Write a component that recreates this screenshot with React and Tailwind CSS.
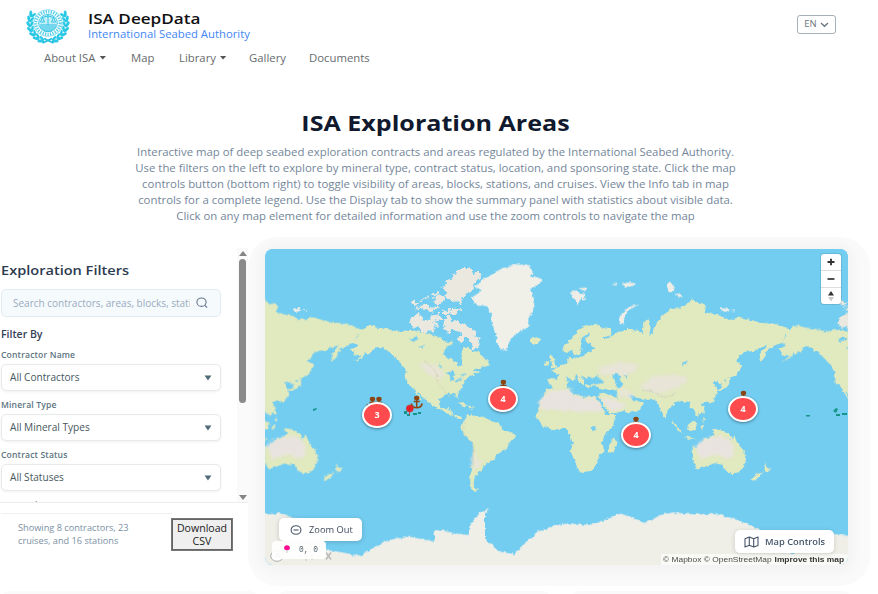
import React from "react";

const FONT = "font-['Open_Sans','Noto_Sans',sans-serif]";

const leaves = [-28, -12, 4, 20, 36, 52, 68];

function Logo() {
  return (
    <svg viewBox="0 0 44 36" className="h-9 w-11 shrink-0" fill="none" stroke="#22bfe2">
      <ellipse cx="22" cy="15" rx="14.500" ry="13.400" strokeWidth="0.7" opacity=".7" />
      <ellipse cx="22" cy="15" rx="12.200" ry="11.200" strokeWidth="3.200" strokeDasharray="1.300 1.200" opacity="0.75" />
      <ellipse cx="22" cy="15" rx="9.400" ry="8.600" strokeWidth="0.8" fill="#c4eef8" />
      <path d="M22 7v10M16 9.500l6-1.500 6 1.500M14.500 14l2-4.500 2 4.500zM25.500 14l2-4.500 2 4.500z" strokeWidth="0.9" />
      <path d="M14 17h16M14 19h16M15.500 21h13M18 23h8" strokeWidth="1" />
      <g fill="#2cc8e6" stroke="none">
        {leaves.map((a) => (
          <g key={a}>
            <g transform={`rotate(${a} 22 15)`}>
              <ellipse cx="41.500" cy="15" rx="1.500" ry="3.400" transform="rotate(25 41.500 15)" />
              <ellipse cx="38.500" cy="15" rx="1.300" ry="3" transform="rotate(-25 38.500 15)" />
            </g>
            <g transform={`rotate(${-a} 22 15)`}>
              <ellipse cx="2.500" cy="15" rx="1.500" ry="3.400" transform="rotate(-25 2.500 15)" />
              <ellipse cx="5.500" cy="15" rx="1.300" ry="3" transform="rotate(25 5.500 15)" />
            </g>
          </g>
        ))}
      </g>
      <path d="M16.500 35l9.500-4.500M27.500 35L18 30.500" strokeWidth="1.800" />
    </svg>
  );
}

/* One full turn of the globe; repeated sideways for the wrapped copies. */
function World() {
  return (
    <g id="world" transform="translate(410 240) scale(.33333)">
      <g fill="#e1e9be">
        <path d="M-150 275l15-15 15-5 20 8 25 2 20 5 20 5 35-6 15 3 25 6 20 4 25 8 15 10 15 10 10-10 5 15-22 3-8 27 22 12 20 12 3 9 10-3-2-20 6-18 0-15 13-2 15 17 20-8 5 18 20 15 8 13-18 7-20 3-15 7 25 3-20 8-15 9-15 17-5 13-15 17 5 18-7-3-8-15-25 3-18 13-2 18 10 14 20-3 3 8 9 15 12-3 14 8-7 6-12-6-23-12-20-11-20-9-22-16-18-20-12-10 14 27-4 0-24-42-15-10-5-20 2-15-12-20-20-20-15-15-25-17-20 0-10 12-14 10-8-8-3 14-34 17 28-20-26-4-8-20 22-3-7-8-18-4 19-8z" />
        <path d="M165 535l10-12 25 7 15 0 30 14 20 6 15 20 35 10-1 12-14 13-10 20-20 10-15 20-25 15-15 20-8 10-12 15-5 15 5 15 10 6-15 1-12-17 0-25 8-20 2-30 5-30-5-20-20-20-15-22 5-18z" />
        <path d="M410 445l35 2 30-7 10 20 35 10 40 0 10 20 20 35 30 0-8 28-32 37-1 25 5 20-20 10 3 18-25 29-35 6-10-28-15-35 6-28-14-27 0-12-20-2-25 5-28-12-22-26 5-25z" />
        <path d="M410 415l30 0 5-12-20-10 26-14 24-13-2-18 14 10 22-6 22-13 25-13-15-14-12 0-3-16 13-13-2-5-15 10-12 18 6 18-12 22-12 1-6-20-14 12-12-5-1-14 14-10 12-16 18-24 26-14 30-5 18 12 26 5 1 18-24 6 8 6 28-19 37-9 26 1 18 8 6-32 11-12 8 25-5 30 15-20 12-30 35-32 40-6 28-24 18 12 24 6-5 20 52 13 18 11 40-8 55 16 50 5 30 10 27 22-17 7-12-12-5 22-25 14-20 10-12 24-13 17-3-24 22-29-15 7-22 12-35 3-22 26 20 15-18 29-22 8-15 7 6 18-10 5-12-20-18 3 10 18 5 15-18 28-22-4-10 8 6 19-15 18-12-15-8-10-8-18-18-4-22 5-18 18-14 28-14-30-10-24-30 0-28-6-20-10-6 3 15 18 32 3-13 22-40 9-22-30-9-25-2-15-20 2-25-5-15-10-12 7-20-27-15-6 22 20 10 18-8-3-22-15-18-12-12 5-10 13-14 16-26-2z" />
        <path d="M562 466l20-8 40 18 34 17-16 20-40 10-16-18z" />
        <path d="M422 345l10 8 2 16 10 14-22 2 4-14-6-12zM404 366l14-4-2 14-10 2zM360 296l22-4 10 8-12 12-20-4zM614 592l6 16-10 28-14 2-2-18 10-14z" />
        <path d="M850 370l0 40-3-2-2-34zM952 370l4 40-4 0-3-30zM948 418l10-4 0 18-12 14-26 8 4-8 18-6z" />
        <path d="M783 540l8 8 16 18 10 14-12-6-20-26zM832 558l20-16 12 8-8 18-20 2zM870 560l12-6-6 18zM905 568l24-2 28 16 12 18-22-8-18 2-12-14zM873 500l8 0 4 20-8 0-5-12zM880 530l8 10-8 6zM820 588l28 6 14 4-28-2z" />
        <path d="M848 618l14 4 26-28 10 0 18-14 20-6 10 4 0 12 18 10 8-16 10 26 18 20 9 20-8 32-18 18-28-4-18-22-24-4-30 10-16 6-10-4-8-28z" />
        <path d="M962 693l12 0-4 10-6 0zM1063 668l8 16 13-2-10 14-10 0zM1060 694l-10 16-18 12-8-5 18-14zM140 485l22 4 16 10-16 0zM176 500l18 2-10 5z" />
      </g>
      <g fill="#e9e3e0" filter="url(#soft)">
        <path d="M387 484l28-30 35-3 30-3 10 17 35 10 38 2 20 36-60 3-70-6-60 0z" />
        <path d="M570 474l32 2 22 10 24 8-12 12-34 6z" />
        <path d="M30 370l40 0 30 25-5 25-25-8-30-20zM187 640l6-10 8 30 18 0-10 22-18 6-6-8z" opacity=".75" />
        <path d="M690 438l42-30 55-4 48 8-10 18-40 20-40 10-40-10zM560 385l70-20 60 10-30 30-90 0zM635 442l38 20-10 14-40-10z" opacity=".75" />
        <path d="M856 616l22-16 28-8 28-4 28 12 10 22-2 28-22 6-28-14-30 8-20 10z" />
      </g>
      <g fill="#ebe8df" filter="url(#frayed)">
        <path d="M0 232l20-10 8 14 30 4 25 22-16 20-30-5-20-20-17-12zM97 238l20-8 14 14 22 0 18 14 12 18 20 10 10 22-5 20-16-8-20-24-16 10-12-8 8-24-26-8-12 12-16-14zM60 230l14-5 6 20-14 15-8-14zM114 160l26-12 22 8-6 30-24-2-20-10zM70 180l20-10 20 8-12 12zM98 130l18-14 20-18 30-12 30 8 22 10-14 14-4 14-12 12-10 18-20 16-26-8-16-10-14-12zM20 200l24-6 18 10 20-6 10 12-44 6zM98 208l48-2 6 12-52 4zM25 180l24-14 0 12zM60 160l24 0 6 8-20 2zM5 190l10-8 10 8-14 10zM66 226l24 0 4 12-20 2z" />
      </g>
      <path fill="#f0efe8" d="M185 170l20-10 10-10-20-10 20-20 25-15 25-10 5-10 30-5 25-10 35 10 10 20-10 12 25-2 13 12-18 13-20 15 15 30-5 30-15 25 0 27-35 18-20 20-12 30-18-5-10-25-10-40-5-35-10-25-25-5-20-5z" />
      <path fill="#efede7" d="M480 152l20 0 8 10 14-6 6 24-14-4-12 16-10-14zM508 145l26-4-10 14zM628 248l8-28 22-20 28-6-30 16-14 22 4 24zM606 134l10-4 4 8zM638 132l18-4 20 2-8 8-24 2zM770 134l12-8 10 16-4 18-14-10zM798 162l12-2 8 12-14 2zM932 206l22-2 4 10-22 2zM964 211l12 0 0 4zM1080 252l10 0-2 4z" />
      <g fill="#73cdf0">
        <path d="M522 422l14-14 12 8 14-10 6 8 16 12-22 6-28 2-12-2zM606 408l16-8 10 8-8 8 14 18-6 12-16-6 0-18zM644 404l12 2-6 10zM108 400l20-8 12 10-12 4 4 14-10 4-2-18zM134 418l24-6-6 10-16 2zM152 404l16-4-8 8zM22 324l26-8-8 10zM0 298l14-8 12 6-16 10zM84 368l14 16-8-2zM816 374l16-14 0 6-14 14zM545 560l12-4-2 14-8 4zM50 270l22 4-16 8z" />
        <path d="M470 410l16 10 20 24-14-8-22-14zM500 402l8 16-4 10-10-16zM560 468l6 2 26 48-4 4z" />
      </g>
      <path d="M700 452q35-2 48 18 28 4 45-8" fill="none" stroke="#d0cdc3" strokeWidth="3" />
      <path d="M40 358l35 32 12 40 30 40M165 545l-5 30 30 42 0 60" fill="none" stroke="#d8d8ba" strokeWidth="3" />
    </g>
  );
}

function Anchor({ x, y }) {
  return (
    <g transform={`translate(${x} ${y})`} fill="none" stroke="#8b4513" strokeWidth="2">
      <ellipse cx="0" cy="-4" rx="2.700" ry="2.300" fill="#8b4513" stroke="none" />
      <path d="M0-3v8.500M-3-.5h6" strokeWidth="1.500" />
      <path d="M-5.500 1.500q1 4.300 5.500 4.300T5.500 1.500" strokeWidth="1.600" />
    </g>
  );
}

function MapCanvas() {
  return (
    <svg viewBox="265 249 583 316" className="absolute inset-0 h-full w-full">
      <defs>
        <filter id="coast" x="-5%" y="-5%" width="110%" height="110%">
          <feTurbulence type="fractalNoise" baseFrequency="0.22" numOctaves="3" seed="8" result="n" />
          <feDisplacementMap in="SourceGraphic" in2="n" scale="4.500" xChannelSelector="R" yChannelSelector="G" />
        </filter>
        <filter id="frayed" x="-10%" y="-10%" width="120%" height="120%">
          <feTurbulence type="fractalNoise" baseFrequency="0.05" numOctaves="2" seed="3" result="n" />
          <feDisplacementMap in="SourceGraphic" in2="n" scale="34" xChannelSelector="R" yChannelSelector="G" />
        </filter>
        <filter id="soft">
          <feGaussianBlur stdDeviation="4" />
        </filter>
      </defs>
      <rect x="265" y="249" width="583" height="316" fill="#73cdf0" />
      <g filter="url(#coast)">
        <World />
        <use href="#world" x="-428.3" />
        <use href="#world" x="428.3" />
        <path
          transform="translate(255 430) scale(.33333)"
          fill="#efefe8"
          d="M0 256L75 250 190 290 225 305 205 330 215 360 250 365 320 378 350 355 400 330 455 318 515 330 538 335 540 300 560 300 600 310 640 315 650 280 675 245 705 235 690 250 690 325 735 365 778 372 820 330 850 305 900 285 945 280 1005 285 1045 272 1095 250 1130 262 1170 278 1215 255 1255 247 1315 253 1385 252 1445 268 1515 300 1500 335 1540 365 1620 370 1630 330 1720 310 1800 320V430H0z"
        />
      </g>
      <g fill="#159488">
        <path d="M313 409l4-1-1 2-3 1zM404 411h3v3h-3zM407 414h3v2h-3zM413 413h4v2h-4zM418 412h3v2h-3zM806 415h4v1.500h-4zM833 411l3-3 2 1-2 4zM836 414h4v2h-4zM842 413h5v2h-5z" />
      </g>
      <Anchor x={372.5} y={403} />
      <Anchor x={379} y={403} />
      <Anchor x={416.7} y={402} />
      <Anchor x={503.4} y={386} />
      <Anchor x={636} y={423} />
      <Anchor x={743.5} y={397} />
      <path d="M409.500 410v5" stroke="#b34b4b" strokeWidth="1" />
      <circle cx="409.800" cy="408.500" r="3.600" fill="#e51f28" stroke="#b34b4b" strokeWidth=".6" />
    </svg>
  );
}

const clusters = [
  { n: 3, pos: "left-[97px] top-[153px]" },
  { n: 4, pos: "left-[223px] top-[137px]" },
  { n: 4, pos: "left-[356px] top-[173px]" },
  { n: 4, pos: "left-[463px] top-[147px]" },
];

const nav = [
  { label: "About ISA", caret: true, w: "w-[87px]" },
  { label: "Map", w: "w-12" },
  { label: "Library", caret: true, w: "w-[70px]" },
  { label: "Gallery", w: "w-[60px]" },
  { label: "Documents", w: "w-20" },
];

function Select({ label, value }) {
  return (
    <div className="mb-[7px] h-[43px]">
      <div className="h-[16px] text-[8.600px] leading-[15px] font-semibold tracking-[0.15px] text-[#5b7480]">{label}</div>
      <div className="flex h-[27px] w-[220px] items-center justify-between rounded-[5px] border border-[#e6eaed] bg-white px-[8px] text-[10.100px] text-[#475860] shadow-[0_1px_3px_rgba(0,0,0,0.06)]">
        <span>{value}</span>
        <svg viewBox="0 0 8 7" className="h-[6px] w-2"><path d="M0 .5h8L4 6.500z" fill="#4e6b77" /></svg>
      </div>
    </div>
  );
}

const description = [
  "Interactive map of deep seabed exploration contracts and areas regulated by the International Seabed Authority.",
  "Use the filters on the left to explore by mineral type, contract status, location, and sponsoring state. Click the map",
  "controls button (bottom right) to toggle visibility of areas, blocks, stations, and cruises. View the Info tab in map",
  "controls for a complete legend. Use the Display tab to show the summary panel with statistics about visible data.",
  "Click on any map element for detailed information and use the zoom controls to navigate the map",
];

export default function App() {
  return (
    <div className={`flex h-[594px] w-[878px] flex-col overflow-hidden bg-white ${FONT}`}>
      <header className="h-[102px] shrink-0">
        <div className="flex h-[48px] items-start pt-[8px] pl-[26px]">
          <Logo />
          <div className="ml-[18px] flex-1">
            <div className="w-fit origin-left scale-x-[1.14] text-[15px] leading-[20px] font-semibold whitespace-nowrap text-[#111]">ISA DeepData</div>
            <div className="w-fit origin-left scale-x-[1.076] text-[10.5px] leading-[12px] text-[#3f86f5]">International Seabed Authority</div>
          </div>
          <div className="mt-[7px] mr-[42px] flex h-[19px] w-[39px] items-center justify-center gap-[3px] rounded-[3px] border border-[#a7b0b6] text-[9.500px] text-[#6c757d]">
            EN
            <svg viewBox="0 0 9 6" className="h-[6px] w-[9px]" fill="none" stroke="#6c757d" strokeWidth="1.3"><path d="M1 1l3.500 3.300L8 1" /></svg>
          </div>
        </div>
        <nav className="flex h-5 items-center pl-[44px] text-[10.8px] text-[#666b6e]">
          {nav.map((n) => (
            <div key={n.label} className={n.w}>
              <div className="flex w-fit origin-left scale-x-[1.05] items-center gap-[4px] whitespace-nowrap">
                {n.label}
                {n.caret && <svg viewBox="0 0 6 4" className="h-[4px] w-[6px]"><path d="M0 0h6L3 3.600z" fill="#555" /></svg>}
              </div>
            </div>
          ))}
        </nav>
      </header>

      <section className="h-[135px] shrink-0 pr-[7px] text-center">
        <h1 className="h-[42px] scale-x-[1.14] text-[22px] leading-[40px] font-bold text-[#10192d]">ISA Exploration Areas</h1>
        <div className="scale-x-[1.053] text-[10.8px] leading-[15.9px] whitespace-nowrap text-[#74869a]">
          {description.map((d) => <div key={d}>{d}</div>)}
        </div>
      </section>

      <main className="flex h-[349px] shrink-0">
        <aside className="flex w-[248px] shrink-0 flex-col">
          <div className="flex h-[266px] border-b border-[#ebeef0]">
            <div className="w-[237px] overflow-hidden pt-[22px] pl-px">
              <h2 className="h-[30px] w-fit origin-left scale-x-[1.12] text-[13px] leading-[23px] font-semibold text-[#2c3a4e]">Exploration Filters</h2>
              <div className="flex h-[28px] w-[220px] items-center rounded-[5px] border border-[#e3ebf2] bg-[#f5fafc] pl-[11px]">
                <div className="w-[177px] overflow-hidden text-[10px] whitespace-nowrap text-[#9aabc0]">Search contractors, areas, blocks, stations</div>
                <svg viewBox="0 0 12 12" className="ml-[6px] h-[12px] w-[12px]" fill="none" stroke="#66758e" strokeWidth="1.1"><ellipse cx="5.500" cy="5.200" rx="4.600" ry="4.200" /><path d="M8.600 8.200l2.500 2.500" /></svg>
              </div>
              <div className="mt-[9px] h-[22px] text-[10.5px] leading-[17px] font-semibold text-[#334155]">Filter By</div>
              <Select label="Contractor Name" value="All Contractors" />
              <Select label="Mineral Type" value="All Mineral Types" />
              <Select label="Contract Status" value="All Statuses" />
              <div className="text-[8.600px] leading-[15px] font-semibold text-[#5b7480]">Sponsoring State</div>
            </div>
            <div className="mt-[11px] flex w-[11px] flex-col items-center justify-between bg-[#fafafa] pt-[3px] pb-[2px]">
              <svg viewBox="0 0 8 5" className="h-[5px] w-2"><path d="M4 0l4 5H0z" fill="#858585" /></svg>
              <div className="mt-[3px] mb-auto h-[144px] w-[7px] rounded-full bg-[#8a8a8a]" />
              <svg viewBox="0 0 8 5" className="h-[5px] w-2"><path d="M4 5l4-5H0z" fill="#858585" /></svg>
            </div>
          </div>
          <div className="mt-[10px] ml-px h-px w-[171px] bg-[#eef1f3]" />
          <div className="flex pt-[5px] pl-[18px]">
            <div className="w-[154px] pt-[3px] text-[9.200px] leading-[12.500px] whitespace-nowrap text-[#7b90a3]">Showing 8 contractors, 23<br />cruises, and 16 stations</div>
            <button className="h-[31px] w-[60px] border-[1.500px] border-[#646464] bg-[#efefef] text-[10.600px] leading-[13px] text-[#222] outline-[0.5px] outline-[#777]">Download CSV</button>
          </div>
        </aside>

        <div className="h-[349px] w-[622px] rounded-[30px] bg-[#fafafa] pt-[12px] pl-[17px]">
          <div className="relative h-[316px] w-[583px] overflow-hidden rounded-[8px] bg-[#73cdf0] shadow-[0_1px_14px_5px_rgba(0,0,0,0.035)]">
            <MapCanvas />
            {clusters.map((c) => (
              <div key={c.pos} className={`absolute flex h-[26px] w-[30px] items-center justify-center rounded-[50%] border-[2.500px] border-white bg-[#ff4b4d] text-[9px] font-bold text-white shadow-[0_1px_3px_rgba(0,0,0,0.4)] ${c.pos}`}>{c.n}</div>
            ))}
            <div className="absolute top-[5px] right-[7px] flex h-[50px] w-[20px] flex-col divide-y divide-[#ddd] rounded-[3px] bg-white shadow-[0_0_0_1px_rgba(0,0,0,0.1)]">
              <svg viewBox="0 0 20 17" className="h-[17px] w-5"><path d="M10 5v7M6.300 8.500h7.400" stroke="#333" strokeWidth="2" /></svg>
              <svg viewBox="0 0 20 17" className="h-[17px] w-5"><path d="M6.300 8.500h7.400" stroke="#333" strokeWidth="1.800" /></svg>
              <svg viewBox="0 0 20 16" className="h-[16px] w-5"><path d="M10 3l3 4.500H7z" fill="#333" /><path d="M10 13.500L7 9h6z" fill="#ccc" /></svg>
            </div>
            <div className="absolute bottom-[24px] left-[14px] flex h-[23px] w-[83px] items-center gap-[7px] rounded-[5px] bg-white pl-[11px] text-[9.300px] whitespace-nowrap text-[#3f4c5c] shadow-[0_1px_5px_rgba(0,0,0,0.18)]">
              <svg viewBox="0 0 12 10" className="h-[10px] w-3 shrink-0" fill="none" stroke="#475569" strokeWidth="1.100"><ellipse cx="6" cy="5" rx="4.900" ry="4.300" /><path d="M3.500 5h5" /></svg>
              Zoom Out
            </div>
            <svg viewBox="0 0 62 12" className="absolute bottom-[3px] left-[5px] h-3 w-[62px]" fill="#fff" stroke="#aaa">
              <ellipse cx="7" cy="6" rx="6.300" ry="5.300" /><circle cx="8" cy="5" r="2.500" fill="#ccc" stroke="none" />
              <path d="M18 9V4M22 9V4M27 6h5M36 3v8M42 3v7M48 6h5" stroke="#ccc" strokeWidth="1.300" />
              <path d="M56 2.500l5 7M61 2.500l-5 7" stroke="#bbb" strokeWidth="1.500" />
            </svg>
            <div className="absolute bottom-[6px] left-[7px] flex h-[18px] w-[54px] items-center rounded-[4px] bg-white/90 pl-[12px] font-['Liberation_Mono',monospace] text-[9px] whitespace-nowrap text-[#53656c]">
              <svg viewBox="0 0 6 8" className="mr-[9px] mb-[3px] h-[8px] w-[6px] shrink-0"><ellipse cx="3" cy="2.700" rx="2.900" ry="2.500" fill="#ff0b93" /><path d="M3 5v3" stroke="#bbb" strokeWidth=".8" /></svg>
              <span className="origin-left translate-y-px scale-x-[0.88]">0, 0</span>
            </div>
            <div className="absolute right-0 bottom-0 flex h-[11px] w-[187px] items-center justify-between bg-white/60 pr-[4px] pl-[2px] font-['Liberation_Sans',Arial,sans-serif] text-[7.500px] whitespace-nowrap text-[#4a4a4a]">
              <span className="origin-left scale-x-[1.12]">© Mapbox © OpenStreetMap</span><b className="origin-right scale-x-[1.12] text-[#333]">Improve this map</b>
            </div>
            <div className="absolute right-[14px] bottom-[12px] flex h-[23px] w-[99px] items-center gap-[6px] rounded-[5px] bg-white pl-[9px] text-[9.300px] font-semibold whitespace-nowrap text-[#46566a] shadow-[0_1px_5px_rgba(0,0,0,0.15)]">
              <svg viewBox="0 0 15 12" className="h-[12px] w-[15px] shrink-0" fill="none" stroke="#46566a" strokeWidth="1.100" strokeLinejoin="round"><path d="M1 2.800l4.300-1.800 4.400 1.800L14 1v8.500L9.700 11 5.300 9.200 1 11zM5.300 1v8.200M9.700 2.800V11" /></svg>
              Map Controls
            </div>
          </div>
        </div>
      </main>

      <div className="flex gap-[18px] pt-[5px]">
        <div className="h-[10px] w-[259px] rounded-t-[10px] bg-[#fafafa]" />
        <div className="h-[10px] w-[275px] rounded-t-[10px] bg-[#fafafa]" />
        <div className="h-[10px] w-[282px] rounded-t-[10px] bg-[#fafafa]" />
      </div>
    </div>
  );
}
